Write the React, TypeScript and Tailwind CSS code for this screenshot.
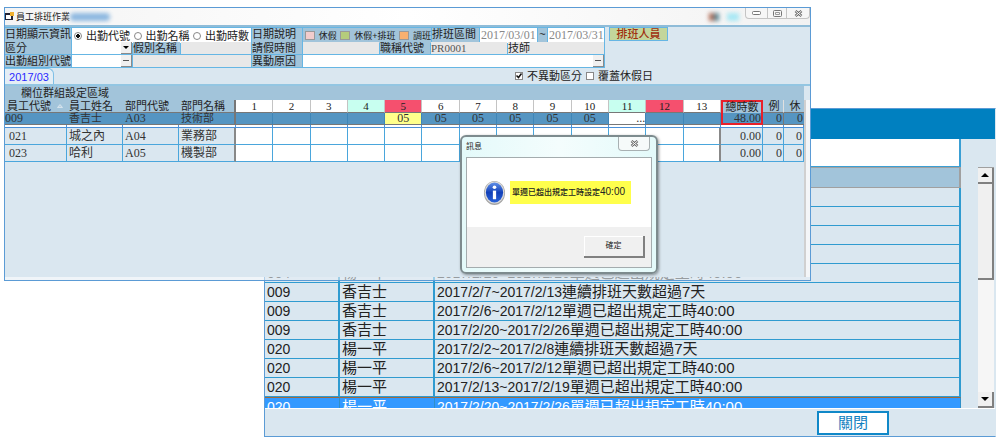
import React from "react";

const days = Array.from({ length: 13 }, (_, i) => i + 1);

const people = [
  { id: "021", name: "城之內", dept: "A04", deptName: "業務部" },
  { id: "023", name: "哈利", dept: "A05", deptName: "機製部" },
];

const warnings = [
  { id: "", name: "", range: "", text: "" },
  { id: "", name: "", range: "", text: "" },
  { id: "", name: "", range: "", text: "" },
  { id: "", name: "", range: "", text: "" },
  { id: "004", name: "楊一平", range: "2017/2/20~2017/2/26", text: "單週已超出規定工時40:00" },
  { id: "009", name: "香吉士", range: "2017/2/7~2017/2/13", text: "連續排班天數超過7天" },
  { id: "009", name: "香吉士", range: "2017/2/6~2017/2/12", text: "單週已超出規定工時40:00" },
  { id: "009", name: "香吉士", range: "2017/2/20~2017/2/26", text: "單週已超出規定工時40:00" },
  { id: "020", name: "楊一平", range: "2017/2/2~2017/2/8", text: "連續排班天數超過7天" },
  { id: "020", name: "楊一平", range: "2017/2/6~2017/2/12", text: "單週已超出規定工時40:00" },
  { id: "020", name: "楊一平", range: "2017/2/13~2017/2/19", text: "單週已超出規定工時40:00" },
  { id: "020", name: "楊一平", range: "2017/2/20~2017/2/26", text: "單週已超出規定工時40:00" },
];

const sans = "font-['Liberation_Sans','Noto_Sans_CJK_TC',sans-serif]";
const serif = "font-['Liberation_Serif','Noto_Sans_CJK_TC',serif]";

function Label({ children, htmlFor }: { children: React.ReactNode; htmlFor?: string }) {
  return (
    <label htmlFor={htmlFor} className="overflow-hidden whitespace-nowrap bg-[#a2c4da] leading-3">
      {children}
    </label>
  );
}

function Arrow({ down = false }: { down?: boolean }) {
  return (
    <svg viewBox="0 0 8 4" className="h-1 w-2" aria-hidden="true">
      <path d={down ? "M0 0h8L4 4z" : "M0 4h8L4 0z"} fill="#000" />
    </svg>
  );
}

function MoreButton({ label }: { label: string }) {
  return (
    <button
      aria-label={label}
      className="flex w-[11px] shrink-0 items-center justify-center border-b border-r border-[#8a8a8a] bg-[#f0f0f0]"
    >
      <svg viewBox="0 0 6 1" className="h-px w-1.5" aria-hidden="true">
        <path d="M0 0h6v1H0z" fill="#555" />
      </svg>
    </button>
  );
}

function Cross() {
  return (
    <svg viewBox="0 0 9 7" className="h-[7px] w-[9px]" fill="none" aria-hidden="true">
      <path d="M1.5 1l6 5M7.5 1l-6 5" stroke="#666" strokeWidth="2.6" />
      <path d="M1.5 1l6 5M7.5 1l-6 5" stroke="#fff" strokeWidth="1" />
    </svg>
  );
}

function WarningWindow() {
  return (
    <section
      className={`absolute bottom-[3px] left-[264px] right-[11px] top-[108px] flex flex-col border border-[#5b9bd5] border-r-[#dae7f0] bg-[#dae7f0] text-[#222] ${sans}`}
    >
      <div className="h-[30px] shrink-0 bg-[#0080c0]" />
      <div className="mr-[34px] h-7 shrink-0 border-b border-r-2 border-[#3a9fd4] bg-white" />
      <div className="flex min-h-0 flex-1">
        <div className="min-w-0 flex-1 overflow-hidden">
          <table className="w-full table-fixed border-separate border-spacing-0 text-left">
            <colgroup>
              <col className="w-[75px]" />
              <col className="w-[95px]" />
              <col />
            </colgroup>
            <thead>
              <tr className="h-[21px] bg-[#a2c4da]">
                <th className="border-y border-[#a0a0a0] p-0" />
                <th className="border-y border-[#a0a0a0] p-0" />
                <th className="border-y border-r-2 border-[#a0a0a0] p-0" />
              </tr>
            </thead>
            <tbody>
              {warnings.map((w, i) => {
                const last = i === warnings.length - 1;
                const cell = last
                  ? "h-[19px] whitespace-nowrap border-t border-r border-t-[#a06a3c] border-r-[#2f8fc8] bg-[#3399ff] p-0 pl-0.5 align-middle leading-4 text-white"
                  : "h-[19px] whitespace-nowrap border-b border-r-2 border-[#2f9bd0] p-0 pl-0.5 align-middle leading-4";
                return (
                  <tr key={i}>
                    <td className={`${cell} text-sm`}>{w.id}</td>
                    <td className={`${cell} text-[15px]`}>{w.name}</td>
                    <td className={`${cell} text-[15px]`}>
                      <span className="text-sm leading-none">{w.range}</span>
                      {w.text}
                    </td>
                  </tr>
                );
              })}
            </tbody>
          </table>
        </div>
        <div className="ml-[17px] mr-px flex w-4 shrink-0 flex-col border-t border-[#a0a0a0] bg-[#f6f6f6]">
          <button
            aria-label="向上捲動"
            className="flex h-4 items-center justify-center border-b-2 border-r-2 border-[#808080] bg-[#f0f0f0]"
          >
            <Arrow />
          </button>
          <div className="h-24 border-b-2 border-r-2 border-[#808080] bg-[#f0f0f0]" />
          <div className="flex-1" />
          <button
            aria-label="向下捲動"
            className="flex h-4 items-center justify-center border-b-2 border-r-2 border-[#808080] bg-[#f0f0f0]"
          >
            <Arrow down />
          </button>
        </div>
      </div>
      <div className="flex h-7 shrink-0 items-center justify-end border-t border-white pr-[106px]">
        <button className="h-6 w-[72px] border-2 border-[#1088c8] bg-white text-[15px] leading-5 text-[#1080c0]">
          關閉
        </button>
      </div>
    </section>
  );
}

function FilterForm() {
  const radio =
    "size-2 appearance-none rounded-full border border-[#888] bg-white checked:bg-[radial-gradient(#111_45%,#fff_50%)]";
  return (
    <div className="flex shrink-0 items-start gap-1 bg-[#dae7f0]">
      <div className="flex w-[600px] flex-col gap-px border-y border-r border-[#66b6e4] bg-[#66b6e4]">
        <div className="grid h-[13px] grid-cols-[66px_179px_50px_128px_47px_57px_9px_1fr] gap-px">
          <Label>日期顯示資訊</Label>
          <div className="flex items-center justify-between bg-white px-0.5">
            <label className="flex items-center gap-1 leading-3">
              <input type="radio" name="show" defaultChecked className={radio} />
              出勤代號
            </label>
            <label className="flex items-center gap-1 leading-3">
              <input type="radio" name="show" className={radio} />
              出勤名稱
            </label>
            <label className="flex items-center gap-1 leading-3">
              <input type="radio" name="show" className={radio} />
              出勤時數
            </label>
          </div>
          <Label>日期說明</Label>
          <div className="flex items-center justify-between whitespace-nowrap bg-[#a2c4da] pl-0.5 text-[9px] leading-3">
            <span className="h-[9px] w-2.5 border border-[#999] bg-[#f2cccc]" />
            休假
            <span className="h-[9px] w-2.5 border border-[#999] bg-[#b5cc7c]" />
            休假+排班
            <span className="h-[9px] w-2.5 border border-[#999] bg-[#f8b070]" />
            調班
          </div>
          <Label htmlFor="from">排班區間</Label>
          <input
            id="from"
            defaultValue="2017/03/01"
            className={`min-w-0 bg-white pl-px text-xs leading-3 text-[#888] ${serif}`}
          />
          <span className="bg-[#a2c4da] text-center leading-3">~</span>
          <input
            aria-label="排班區間迄"
            defaultValue="2017/03/31"
            className={`min-w-0 bg-white pl-px text-xs leading-3 text-[#888] ${serif}`}
          />
        </div>
        <div className="grid h-3 grid-cols-[66px_60px_47px_70px_50px_76px_50px_76px_1fr] gap-px">
          <Label htmlFor="kind">區分</Label>
          <div className="flex items-stretch bg-white">
            <select id="kind" className="min-w-0 flex-1 appearance-none bg-white text-[10px] leading-3">
              <option />
            </select>
            <span className="pointer-events-none flex w-[11px] items-center justify-center border-b border-r border-[#8a8a8a] bg-[#f0f0f0]">
              <svg viewBox="0 0 6 3" className="h-[3px] w-1.5" aria-hidden="true">
                <path d="M0 0h6L3 3z" fill="#000" />
              </svg>
            </span>
          </div>
          <Label>假別名稱</Label>
          <div className="bg-[#e8e8e8]" />
          <Label>請假時間</Label>
          <div className="bg-[#e8e8e8]" />
          <Label>職稱代號</Label>
          <div className={`bg-[#e8e8e8] leading-3 text-[#555] ${serif}`}>PR0001</div>
          <div className="bg-[#e8e8e8] leading-3">技師</div>
        </div>
        <div className="grid h-3 grid-cols-[66px_60px_118px_50px_1fr] gap-px">
          <Label htmlFor="group">出勤組別代號</Label>
          <div className="flex items-stretch bg-white">
            <input id="group" className="min-w-0 flex-1 text-[10px] leading-3" />
            <MoreButton label="選擇組別" />
          </div>
          <div className="bg-[#e8e8e8]" />
          <Label htmlFor="reason">異動原因</Label>
          <div className="flex items-stretch bg-white">
            <input id="reason" className="min-w-0 flex-1 text-[10px] leading-3" />
            <MoreButton label="選擇原因" />
          </div>
        </div>
      </div>
      <button className="h-[14px] w-[59px] border border-[#66b6e4] bg-[#c3d69b] text-[11px] font-medium leading-3 text-[#a03010]">
        排班人員
      </button>
    </div>
  );
}

function dayHead(d: number) {
  if (d === 4 || d === 11) return "bg-[#c8fff0]";
  if (d === 5 || d === 12) return "bg-[#f5506e]";
  return "bg-white";
}

function ScheduleTable() {
  const head = "h-[13px] border-b border-[#777] bg-[#a2c4da] p-0 pl-0.5 font-normal leading-3 whitespace-nowrap";
  const sel = "h-[12px] border-b border-[#777] bg-[#5595c2] p-0 leading-[11px]";
  const thin = "h-[3px] border-b border-r border-[#4a90d9] bg-white p-0";
  const row = "h-[17px] border-b border-r border-[#4aa6dc] p-0 leading-4";
  return (
    <table className="w-full table-fixed border-separate border-spacing-0 text-left">
      <colgroup>
        <col className="w-[62px]" />
        <col className="w-[56px]" />
        <col className="w-[56px]" />
        <col className="w-[57px]" />
        {days.map((d) => (
          <col key={d} />
        ))}
        <col className="w-[42px]" />
        <col className="w-[21px]" />
        <col className="w-[20px]" />
      </colgroup>
      <thead>
        <tr>
          <th className={head}>
            <span className="flex items-center gap-1.5">
              員工代號
              <svg viewBox="0 0 6 4" className="h-1 w-1.5" aria-hidden="true">
                <path d="M.5 3.5h5L3 .5z" fill="#b9d2e2" stroke="#e6eef4" strokeWidth=".7" />
              </svg>
            </span>
          </th>
          <th className={head}>員工姓名</th>
          <th className={head}>部門代號</th>
          <th className={`${head} border-r-2`}>部門名稱</th>
          {days.map((d) => (
            <th
              key={d}
              className={`h-[13px] border-b border-r border-b-[#777] border-r-[#c4c4c4] p-0 text-center text-[11px] font-normal leading-3 ${serif} ${dayHead(d)}`}
            >
              {d}
            </th>
          ))}
          <th className="h-[13px] whitespace-nowrap border-x-2 border-t-2 border-[#e8202a] bg-[#a2c4da] p-0 text-center font-normal leading-[11px]">
            總時數
          </th>
          <th className={`${head} border-r border-r-[#e0e0e0] text-center`}>例</th>
          <th className={`${head} text-center`}>休</th>
        </tr>
      </thead>
      <tbody className="text-[#333]">
        <tr>
          <td className={`${sel} text-xs ${serif}`}>009</td>
          <td className={`${sel} pl-0.5`}>香吉士</td>
          <td className={`${sel} pl-0.5 text-xs ${serif}`}>A03</td>
          <td className={`${sel} border-r-2 pl-0.5`}>技術部</td>
          {days.map((d) => (
            <td
              key={d}
              className={`h-[12px] border-b border-r border-b-[#777] border-r-[#3f86b8] p-0 text-xs leading-[11px] ${serif} ${
                d === 5 ? "bg-[#ffff8c] text-center" : d === 11 ? "bg-white text-right" : "bg-[#5595c2] text-center"
              }`}
            >
              {d >= 5 && d <= 10 ? "05" : d === 11 ? "..." : ""}
            </td>
          ))}
          <td
            className={`h-[12px] border-x-2 border-b-2 border-[#e8202a] bg-[#5595c2] p-0 text-right text-xs leading-[10px] ${serif}`}
          >
            48.00
          </td>
          <td className={`${sel} border-r pr-px text-right text-xs ${serif}`}>0</td>
          <td className={`${sel} pr-px text-right text-xs ${serif}`}>0</td>
        </tr>
        <tr aria-hidden="true">
          {Array.from({ length: 20 }, (_, i) => (
            <td key={i} className={thin} />
          ))}
        </tr>
        {people.map((p) => (
          <tr key={p.id} className="text-xs">
            <td className={`${row} pl-1 ${serif}`}>{p.id}</td>
            <td className={`${row} pl-0.5`}>{p.name}</td>
            <td className={`${row} pl-0.5 ${serif}`}>{p.dept}</td>
            <td className={`${row} border-r-2 border-r-[#888] pl-0.5`}>{p.deptName}</td>
            {days.map((d) => (
              <td key={d} className={`${row} bg-white ${d === 13 ? "border-r-2 border-r-[#888]" : ""}`} />
            ))}
            <td className={`${row} pr-px text-right ${serif}`}>0.00</td>
            <td className={`${row} pr-px text-right ${serif}`}>0</td>
            <td className={`${row} pr-px text-right ${serif}`}>0</td>
          </tr>
        ))}
      </tbody>
    </table>
  );
}

function ScheduleWindow() {
  const box = "size-2 appearance-none border border-[#888] bg-white";
  return (
    <section
      className={`absolute bottom-[159px] left-1 right-[196px] top-[7px] border border-[#5b9bd5] bg-[#e6eff5]/60 pb-[3px] text-[11px] text-[#222] ${sans}`}
    >
      <div className="flex h-full flex-col bg-[#dae7f0]">
        <header className="flex h-[17px] shrink-0 items-center bg-gradient-to-r from-[#f4f4f4] via-white to-[#f2f2f2]">
          <svg viewBox="0 0 9 9" className="mr-0.5 size-[9px]" aria-hidden="true">
            <path d="M0 1h8v7H0z" fill="#223" />
            <path d="M1 3h5v4H1z" fill="#fff" />
            <path d="M5 0h4v4H5z" fill="#f0b030" />
          </svg>
          <h1 className="text-[9px] leading-4">員工排班作業</h1>
          <span className="h-2 w-10 rounded-full bg-[#8db8e0] blur-[2px]" />
          <span className="ml-auto h-2 w-2.5 bg-gradient-to-r from-[#c06040] to-[#2f8fa8] blur-[2px]" />
          <span className="ml-2 mr-1.5 h-2 w-3 bg-[#a8e8f4] blur-[2px]" />
          <div className="flex h-[11px] self-start rounded-b border border-t-0 border-[#c4c4c4] bg-[#f6f6f6]">
            <button aria-label="最小化" className="flex w-[22px] items-center justify-center border-r border-[#c4c4c4]">
              <svg viewBox="0 0 9 4" className="h-1 w-[9px]" aria-hidden="true">
                <rect x=".5" y=".5" width="8" height="3" rx="1" fill="#fff" stroke="#777" />
              </svg>
            </button>
            <button aria-label="最大化" className="flex w-[19px] items-center justify-center border-r border-[#c4c4c4]">
              <svg viewBox="0 0 9 7" className="h-[7px] w-[9px]" fill="none" aria-hidden="true">
                <rect x=".5" y=".5" width="8" height="6" rx="1" stroke="#777" />
                <path d="M2.5 2.5h4v2h-4z" stroke="#999" />
              </svg>
            </button>
            <button aria-label="關閉視窗" className="flex w-[22px] items-center justify-center">
              <Cross />
            </button>
          </div>
        </header>
        <div className="h-0.5 shrink-0 bg-[#8fbcd8]" />
        <FilterForm />
        <div className="flex h-[18px] shrink-0 items-end border-b-2 border-[#93c6e2] bg-[#dae7f0]">
          <button className="h-4 w-[49px] rounded-tr-md border-r border-t border-[#7fc0e6] bg-[#e4eef5] text-[11px] leading-4 text-[#2a2aff]">
            2017/03
          </button>
          <div className="ml-auto mr-[157px] flex items-center gap-1">
            <label className="flex items-center gap-1 leading-4">
              <span className="grid items-center justify-center">
                <input type="checkbox" defaultChecked className={`peer col-start-1 row-start-1 ${box}`} />
                <svg
                  viewBox="0 0 8 8"
                  className="pointer-events-none invisible col-start-1 row-start-1 size-2 peer-checked:visible"
                  fill="none"
                  aria-hidden="true"
                >
                  <path d="M1.5 3.5l2 2 3-4" stroke="#111" strokeWidth="1.5" />
                </svg>
              </span>
              不異動區分
            </label>
            <label className="flex items-center gap-1 leading-4">
              <input type="checkbox" className={box} />
              覆蓋休假日
            </label>
          </div>
        </div>
        <div className="flex min-h-0 flex-1">
          <div className="min-w-0 flex-1">
            <h2 className="bg-[#a2c4da] pl-4 text-[11px] leading-[14px]">欄位群組設定區域</h2>
            <ScheduleTable />
          </div>
          <div className="mt-3.5 w-1.5 border-l-2 border-[#d0d0d0] bg-[#f4f6f8]" />
        </div>
      </div>
    </section>
  );
}

function MessageDialog() {
  return (
    <div
      role="dialog"
      aria-label="訊息"
      className={`absolute left-[460px] top-[135px] flex w-[198px] flex-col rounded-md border-2 border-[#7d8b8e] bg-gradient-to-r from-[#e4fafa] via-[#f4fdfd] to-[#e4fafa] px-1 pb-1 text-[#222] shadow-[1px_1px_3px_#0006] ${sans}`}
    >
      <div className="flex h-5 items-start justify-between pr-0.5">
        <h2 className="pt-1 text-[8px] leading-3">訊息</h2>
        <button
          aria-label="關閉訊息"
          className="flex h-3.5 w-8 items-center justify-center rounded-b border border-t-0 border-[#a8b0b2] bg-[#f6fafa]"
        >
          <Cross />
        </button>
      </div>
      <div className="flex flex-col border border-[#a4acae] bg-[#f0f0f0]">
        <div className="flex h-[69px] items-center gap-1 bg-white pl-4">
          <svg viewBox="0 0 24 26" className="h-[26px] w-[23px]" aria-hidden="true">
            <defs>
              <linearGradient id="ball" x1="0" y1="0" x2="0" y2="1">
                <stop offset="0" stopColor="#5f8fe8" />
                <stop offset=".5" stopColor="#1240b8" />
                <stop offset="1" stopColor="#2a62d8" />
              </linearGradient>
            </defs>
            <ellipse cx="12" cy="13" rx="11" ry="12.5" fill="#a4a4a4" />
            <ellipse cx="12" cy="12.5" rx="10.3" ry="11.5" fill="#dcdcdc" />
            <ellipse cx="12" cy="12.5" rx="9" ry="10.4" fill="url(#ball)" />
            <circle cx="12" cy="7" r="1.9" fill="#fff" />
            <path d="M10.3 10.5h3.4v9h-3.4z" fill="#fff" />
          </svg>
          <p className="whitespace-nowrap bg-[#ffff4c] pl-0.5 pr-1.5 text-[8px] font-medium leading-[22px]">
            單週已超出規定工時設定<span className="text-[10px]">40:00</span>
          </p>
        </div>
        <div className="flex h-10 items-center justify-end pr-1.5">
          <button className="h-[22px] w-[61px] border-b-2 border-r-2 border-[#808080] bg-[#f0f0f0] text-[8px] leading-5 shadow-[inset_1px_1px_0_#fff]">
            確定
          </button>
        </div>
      </div>
    </div>
  );
}

export default function App() {
  return (
    <main className="relative min-h-screen w-full overflow-hidden bg-white">
      <WarningWindow />
      <ScheduleWindow />
      <MessageDialog />
    </main>
  );
}
